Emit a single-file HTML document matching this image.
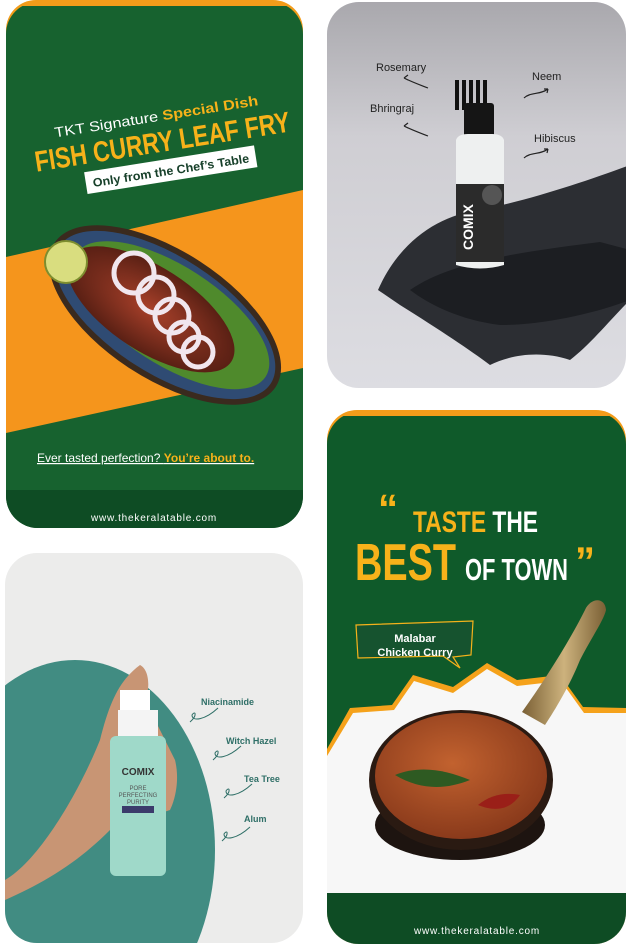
<!DOCTYPE html>
<html><head><meta charset="utf-8"><style>
html,body{margin:0;padding:0;background:#fff;width:631px;height:949px;overflow:hidden;}
svg{display:block;}
text{font-family:"Liberation Sans",sans-serif;}
</style></head><body>
<svg width="631" height="949" viewBox="0 0 631 949" xmlns="http://www.w3.org/2000/svg">
<defs>
<clipPath id="c1"><rect x="6" y="2" width="297" height="526" rx="32"/></clipPath>
<clipPath id="c2"><rect x="327" y="2" width="299" height="386" rx="32"/></clipPath>
<clipPath id="c3"><rect x="5" y="553" width="298" height="390" rx="32"/></clipPath>
<clipPath id="c4"><rect x="327" y="412" width="299" height="532" rx="32"/></clipPath>
<linearGradient id="g2" x1="0" y1="0" x2="0" y2="1"><stop offset="0" stop-color="#a9a8ad"/><stop offset="0.35" stop-color="#cfced3"/><stop offset="1" stop-color="#dddde2"/></linearGradient>
<radialGradient id="gf" cx="0.5" cy="0.5" r="0.5"><stop offset="0" stop-color="#a8402a"/><stop offset="1" stop-color="#5a2014"/></radialGradient>
<radialGradient id="gc" cx="0.45" cy="0.4" r="0.6"><stop offset="0" stop-color="#c2622f"/><stop offset="1" stop-color="#8a3a1b"/></radialGradient>
<linearGradient id="gh" x1="0" y1="0" x2="1" y2="0"><stop offset="0" stop-color="#7a6035"/><stop offset="0.5" stop-color="#cdb27d"/><stop offset="1" stop-color="#7a6035"/></linearGradient>
</defs>

<!-- CARD 1 -->
<rect x="6" y="0" width="297" height="60" rx="30" fill="#f39c1a"/>
<g clip-path="url(#c1)">
<rect x="6" y="6" width="297" height="522" fill="#17622f"/>
<polygon points="6,257 303,190 303,368 6,433" fill="#f5951c"/>
<rect x="6" y="490" width="297" height="40" fill="#0e4c24"/>
<g transform="rotate(-9 160 140)">
<text x="160" y="121" text-anchor="middle" font-size="14" fill="#fff" textLength="206" lengthAdjust="spacingAndGlyphs">TKT Signature <tspan fill="#f7b21a" font-weight="bold">Special Dish</tspan></text>
<text x="162" y="152" text-anchor="middle" font-size="29" font-weight="bold" fill="#f7b21a" textLength="258" lengthAdjust="spacingAndGlyphs">FISH CURRY LEAF FRY</text>
<rect x="80" y="160" width="172" height="22" fill="#fff"/>
<text x="166" y="176" text-anchor="middle" font-size="12" font-weight="bold" fill="#17402a" textLength="158" lengthAdjust="spacingAndGlyphs">Only from the Chef’s Table</text>
</g>
<g transform="rotate(33 165 315)">
<ellipse cx="165" cy="315" rx="132" ry="64" fill="#3a2a1e"/>
<ellipse cx="165" cy="315" rx="126" ry="58" fill="#2f4b73"/>
<ellipse cx="170" cy="312" rx="113" ry="49" fill="#4f8a2c"/>
<ellipse cx="150" cy="318" rx="96" ry="42" fill="url(#gf)"/>
</g>
<circle cx="66" cy="262" r="21" fill="#d9dd7f" stroke="#7d8d2f" stroke-width="2"/>
<g fill="none" stroke="#f1e6ee" stroke-width="5">
<circle cx="134" cy="273" r="20"/><circle cx="156" cy="295" r="18"/><circle cx="172" cy="316" r="17"/><circle cx="184" cy="337" r="15"/><circle cx="198" cy="352" r="15"/>
</g>
<text x="37" y="462" font-size="12" fill="#fff" text-decoration="underline">Ever tasted perfection? <tspan fill="#f7b21a" font-weight="bold">You’re about to.</tspan></text>
<text x="154" y="521" text-anchor="middle" font-size="10" fill="#fff" letter-spacing="0.8">www.thekeralatable.com</text>
</g>

<!-- CARD 2 -->
<g clip-path="url(#c2)">
<rect x="327" y="2" width="299" height="386" fill="url(#g2)"/>
<path d="M378,290 C400,240 440,215 480,210 C530,200 590,180 630,165 L630,300 C610,320 590,345 570,360 C540,350 510,355 490,365 C470,350 440,330 400,305 Z" fill="#2c2e33"/>
<path d="M410,290 C450,262 520,252 600,242 L630,250 L630,300 C590,315 540,325 500,325 C460,320 430,305 410,290Z" fill="#1c1e22"/>
<rect x="455" y="80" width="4" height="30" fill="#111"/><rect x="462" y="80" width="4" height="30" fill="#111"/><rect x="469" y="80" width="4" height="30" fill="#111"/><rect x="476" y="80" width="4" height="30" fill="#111"/><rect x="483" y="80" width="4" height="30" fill="#111"/>
<rect x="464" y="103" width="30" height="34" rx="3" fill="#151515"/>
<path d="M456,140 Q458,134 468,134 L492,134 Q502,134 504,140 L504,265 Q480,272 456,265 Z" fill="#eef0f0"/>
<rect x="456" y="184" width="48" height="78" fill="#2b2b2b"/>
<text x="0" y="0" transform="translate(473,250) rotate(-90)" font-size="14" font-weight="bold" fill="#fff">COMIX</text>
<circle cx="492" cy="195" r="10" fill="#555"/>
<text x="376" y="71" font-size="11" fill="#222">Rosemary</text>
<text x="532" y="80" font-size="11" fill="#222">Neem</text>
<text x="370" y="112" font-size="11" fill="#222">Bhringraj</text>
<text x="534" y="142" font-size="11" fill="#222">Hibiscus</text>
<g fill="none" stroke="#222" stroke-width="1.2">
<path d="M428,88 C415,83 412,82 404,78 M404,78 l4,-3 M404,78 l4,2"/>
<path d="M428,136 C415,131 412,130 404,126 M404,126 l4,-3 M404,126 l4,2"/>
<path d="M524,98 C530,92 540,95 548,89 M548,89 l-4,0 M548,89 l-1,4"/>
<path d="M524,158 C530,152 540,155 548,149 M548,149 l-4,0 M548,149 l-1,4"/>
</g>
</g>

<!-- CARD 3 -->
<g clip-path="url(#c3)">
<rect x="5" y="553" width="298" height="390" fill="#ececeb"/>
<ellipse cx="75" cy="850" rx="140" ry="190" fill="#418c82"/>
<path d="M5,880 C40,860 80,790 100,740 C110,700 120,680 140,665 C150,670 150,690 145,700 L165,740 L175,760 C180,780 175,800 170,810 L110,830 C80,860 50,880 5,900Z" fill="#c89574"/>
<rect x="120" y="690" width="30" height="22" fill="#fff"/>
<rect x="118" y="710" width="40" height="28" fill="#f4f4f4"/>
<rect x="110" y="736" width="56" height="140" rx="6" fill="#9fd9c9"/>
<text x="138" y="775" text-anchor="middle" font-size="10" font-weight="bold" fill="#333">COMIX</text>
<text x="138" y="790" text-anchor="middle" font-size="6" fill="#555">PORE</text>
<text x="138" y="797" text-anchor="middle" font-size="6" fill="#555">PERFECTING</text>
<text x="138" y="804" text-anchor="middle" font-size="6" fill="#555">PURITY</text>
<rect x="122" y="806" width="32" height="7" fill="#3b3b6b"/>
<text x="201" y="705" font-size="9" font-weight="bold" fill="#2f6f67">Niacinamide</text>
<text x="226" y="744" font-size="9" font-weight="bold" fill="#2f6f67">Witch Hazel</text>
<text x="244" y="782" font-size="9" font-weight="bold" fill="#2f6f67">Tea Tree</text>
<text x="244" y="822" font-size="9" font-weight="bold" fill="#2f6f67">Alum</text>
<g fill="none" stroke="#2f6f67" stroke-width="1">
<path d="M190,722 C198,715 195,710 192,715 C192,722 205,720 218,708"/>
<path d="M213,760 C221,753 218,748 215,753 C215,760 228,758 241,746"/>
<path d="M224,798 C232,791 229,786 226,791 C226,798 239,796 252,784"/>
<path d="M222,841 C230,834 227,829 224,834 C224,841 237,839 250,827"/>
</g>
</g>

<!-- CARD 4 -->
<rect x="327" y="410" width="299" height="60" rx="30" fill="#f39c1a"/>
<g clip-path="url(#c4)">
<rect x="327" y="416" width="299" height="528" fill="#0f5a2a"/>
<polygon points="327,749 350,708 392,705 413,675 453,687 487,663 517,680 560,675 583,707 626,708 626,944 327,944" fill="#f5a21b"/>
<polygon points="327,756 353,713 394,710 414,681 453,693 487,669 517,686 561,681 584,713 626,713 626,944 327,944" fill="#f7f7f7"/>
<rect x="327" y="893" width="299" height="51" fill="#0e4c24"/>
<text x="378" y="522" font-size="40" font-weight="bold" fill="#f7b21a">“</text>
<text x="413" y="532" font-size="30" font-weight="bold" fill="#f7b21a" textLength="125" lengthAdjust="spacingAndGlyphs">TASTE <tspan fill="#fff">THE</tspan></text>
<text x="355" y="580" font-size="52" font-weight="bold" fill="#f7b21a" textLength="101" lengthAdjust="spacingAndGlyphs">BEST</text>
<text x="465" y="580" font-size="31" font-weight="bold" fill="#fff" textLength="103" lengthAdjust="spacingAndGlyphs">OF TOWN</text>
<text x="575" y="575" font-size="40" font-weight="bold" fill="#f7b21a">”</text>
<path d="M356,625 L473,621 L471,655 L453,657 L460,668 L443,656 L358,658 Z" fill="#16532f" stroke="#f5b21b" stroke-width="1.2"/>
<text x="415" y="642" text-anchor="middle" font-size="11" font-weight="bold" fill="#fff">Malabar</text>
<text x="415" y="656" text-anchor="middle" font-size="11" font-weight="bold" fill="#fff">Chicken Curry</text>
<path d="M522,712 C545,680 570,640 585,610 C590,598 605,596 606,610 C604,620 590,640 580,660 C570,685 555,710 545,725 Z" fill="url(#gh)"/>
<ellipse cx="460" cy="825" rx="85" ry="35" fill="#1d1410"/>
<ellipse cx="461" cy="780" rx="92" ry="70" fill="#2a1a12"/>
<ellipse cx="461" cy="776" rx="86" ry="63" fill="url(#gc)"/>
<path d="M395,775 C420,765 445,770 470,780 C445,790 420,790 395,775Z" fill="#2e5a22"/>
<path d="M478,805 C490,795 505,792 520,795 C510,810 495,812 478,805Z" fill="#9a1f18"/>
<text x="477" y="934" text-anchor="middle" font-size="10" fill="#fff" letter-spacing="0.8">www.thekeralatable.com</text>
</g>
</svg>
</body></html>
